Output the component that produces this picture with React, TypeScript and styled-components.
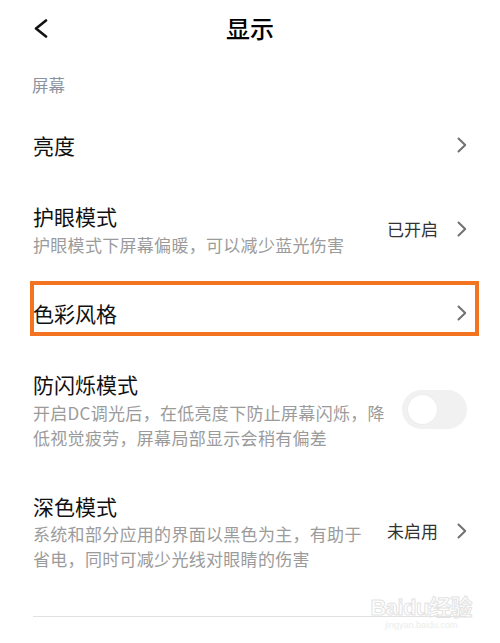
import React from "react";
import styled, { createGlobalStyle } from "styled-components";

const GlobalStyle = createGlobalStyle`
  html, body { margin: 0; padding: 0; background: #ffffff; }
  body {
    font-family: "Noto Sans CJK SC", "Noto Sans", sans-serif;
    -webkit-font-smoothing: antialiased;
  }
`;

const Page = styled.div`
  position: relative;
  width: 500px;
  height: 643px;
  overflow: hidden;
  background: #ffffff;
  display: flex;
  flex-direction: column;
`;

const Header = styled.header`
  height: 55px;
  display: grid;
  grid-template-columns: 1fr auto 1fr;
  align-items: center;
`;

const BackButton = styled.div`
  padding-left: 34px;
  display: flex;
  align-items: center;
  height: 100%;
  padding-top: 2px;
`;

const Title = styled.h1`
  margin: 0;
  font-size: 24px;
  font-weight: 500;
  color: #000;
  line-height: 36px;
`;

const SectionLabel = styled.div`
  margin: 18px 0 12px;
  padding: 0 32px;
  font-size: 16.5px;
  line-height: 24px;
  color: #8c93a0;
`;

const Row = styled.div`
  position: relative;
  display: flex;
  align-items: center;
  padding: 20.5px 33px;
  gap: 12px;
`;

const TextCol = styled.div<{ $maxWidth?: number }>`
  flex: 1;
  min-width: 0;
  max-width: ${(p) => (p.$maxWidth ? `${p.$maxWidth}px` : "none")};
  display: flex;
  flex-direction: column;
`;

const ItemTitle = styled.div`
  font-size: 21px;
  line-height: 30.5px;
  color: #111;
`;

const ItemSub = styled.div`
  font-size: 17px;
  line-height: 25px;
  letter-spacing: 0.3px;
  color: #9b9b9b;
`;

const Trailing = styled.div`
  margin-left: auto;
  display: flex;
  align-items: center;
  gap: 19px;
  flex-shrink: 0;
`;

const ValueText = styled.span`
  font-size: 17px;
  line-height: 25px;
  color: #333;
`;

const Highlight = styled.div`
  position: absolute;
  left: 30px;
  top: 4px;
  width: 449px;
  height: 55px;
  box-sizing: border-box;
  border: 4px solid #f47321;
  pointer-events: none;
`;

const Toggle = styled.div`
  width: 65px;
  height: 39px;
  border-radius: 20px;
  background: #f1f1f1;
  box-sizing: border-box;
  padding: 5px 6px;
  display: flex;
  align-items: center;
`;

const Knob = styled.div`
  width: 29px;
  height: 29px;
  border-radius: 50%;
  background: #ffffff;
  box-shadow: 0 0 2px rgba(0, 0, 0, 0.06);
`;

const Divider = styled.div`
  margin: 24px 33px 0;
  height: 1px;
  background: #e2e2e2;
`;

const Watermark = styled.div`
  position: absolute;
  right: 28px;
  bottom: 12px;
  display: flex;
  flex-direction: column;
  align-items: center;
  pointer-events: none;
`;

const WatermarkMain = styled.div`
  font-family: "Liberation Sans", "Noto Sans CJK SC", sans-serif;
  font-size: 22px;
  font-weight: 700;
  line-height: 24px;
  color: transparent;
  -webkit-text-stroke: 1px #e3e3e3;
  letter-spacing: -0.5px;
`;

const WatermarkSub = styled.div`
  font-family: "Liberation Sans", sans-serif;
  font-size: 9px;
  line-height: 11px;
  color: #ececec;
`;

const Chevron = () => (
  <svg width="10" height="16" viewBox="0 0 10 16" fill="none">
    <polyline
      points="1.5,1.5 8.2,8 1.5,14.5"
      stroke="#707070"
      strokeWidth="2"
      strokeLinecap="round"
      strokeLinejoin="round"
    />
  </svg>
);

const BackIcon = () => (
  <svg width="14" height="19" viewBox="0 0 14 19" fill="none">
    <polyline
      points="12,1.5 2,9.5 12,17.5"
      stroke="#111"
      strokeWidth="2.6"
      strokeLinecap="round"
      strokeLinejoin="round"
    />
  </svg>
);

export default function App() {
  return (
    <>
      <GlobalStyle />
      <Page>
        <Header>
          <BackButton>
            <BackIcon />
          </BackButton>
          <Title>显示</Title>
          <div />
        </Header>

        <SectionLabel>屏幕</SectionLabel>

        <Row>
          <TextCol>
            <ItemTitle>亮度</ItemTitle>
          </TextCol>
          <Trailing>
            <Chevron />
          </Trailing>
        </Row>

        <Row>
          <TextCol>
            <ItemTitle>护眼模式</ItemTitle>
            <ItemSub>护眼模式下屏幕偏暖，可以减少蓝光伤害</ItemSub>
          </TextCol>
          <Trailing>
            <ValueText>已开启</ValueText>
            <Chevron />
          </Trailing>
        </Row>

        <Row>
          <TextCol>
            <ItemTitle>色彩风格</ItemTitle>
          </TextCol>
          <Trailing>
            <Chevron />
          </Trailing>
          <Highlight />
        </Row>

        <Row>
          <TextCol $maxWidth={358}>
            <ItemTitle>防闪烁模式</ItemTitle>
            <ItemSub>开启DC调光后，在低亮度下防止屏幕闪烁，降低视觉疲劳，屏幕局部显示会稍有偏差</ItemSub>
          </TextCol>
          <Trailing>
            <Toggle>
              <Knob />
            </Toggle>
          </Trailing>
        </Row>

        <Row>
          <TextCol $maxWidth={338}>
            <ItemTitle>深色模式</ItemTitle>
            <ItemSub>系统和部分应用的界面以黑色为主，有助于省电，同时可减少光线对眼睛的伤害</ItemSub>
          </TextCol>
          <Trailing>
            <ValueText>未启用</ValueText>
            <Chevron />
          </Trailing>
        </Row>

        <Divider />

        <Watermark>
          <WatermarkMain>Baidu经验</WatermarkMain>
          <WatermarkSub>jingyan.baidu.com</WatermarkSub>
        </Watermark>
      </Page>
    </>
  );
}
